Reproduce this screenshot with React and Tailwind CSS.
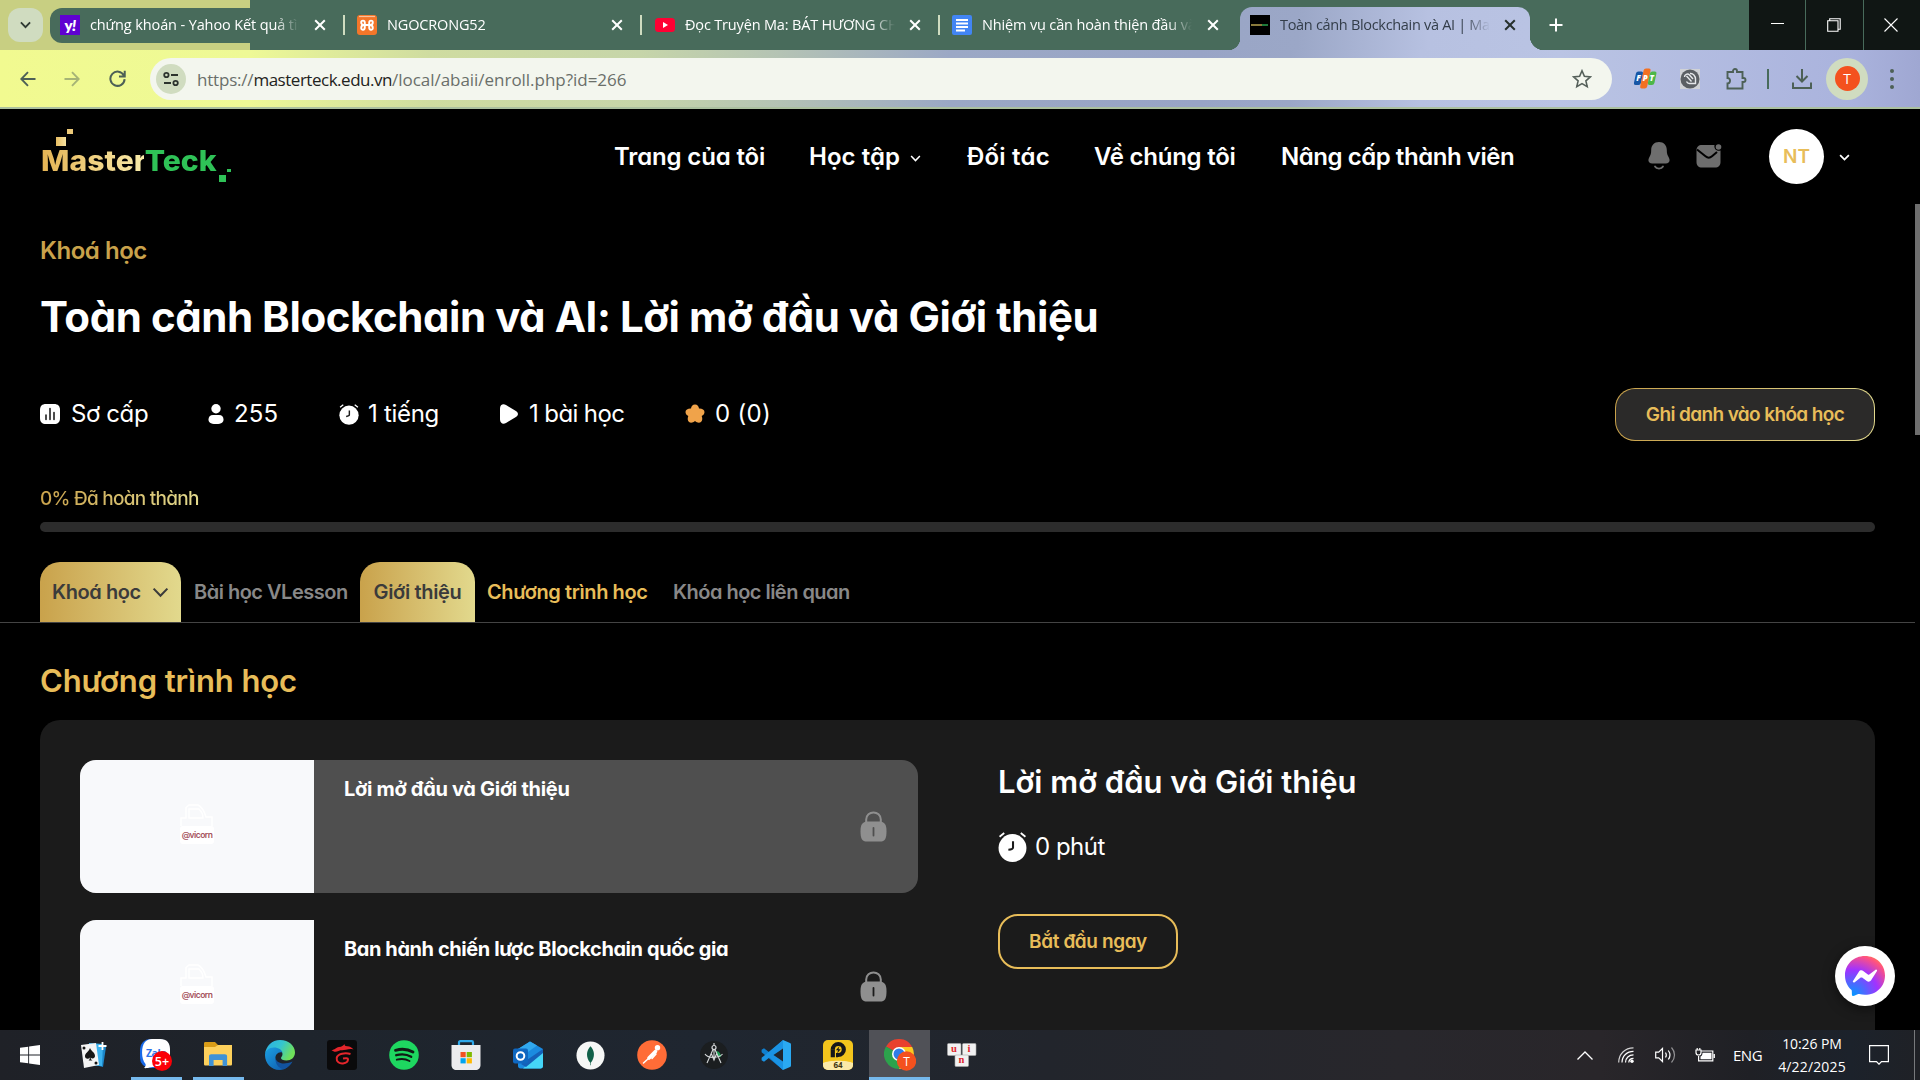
import React from "react";

const page = "font-['Inter','Liberation_Sans',sans-serif]";
const chrome = "font-['Open_Sans','Noto_Sans',sans-serif]";

function Close({ className = "" }) {
  return (
    <svg viewBox="0 0 12 12" className={"w-[12px] h-[12px] shrink-0 " + className} fill="none" stroke="currentColor" strokeWidth="2">
      <path d="M1.2 1.2 10.8 10.8M10.8 1.2 1.2 10.8" />
    </svg>
  );
}

function ChevronDown({ className = "", w = 2 }) {
  return (
    <svg viewBox="0 0 12 8" className={"shrink-0 " + className} fill="none" stroke="currentColor" strokeWidth={w}>
      <path d="M1 1.2 6 6.4 11 1.2" />
    </svg>
  );
}

function Tab({ icon, title, tracking, titleWidth, separator = true, className = "" }) {
  return (
    <div className={"flex items-center h-[35px] shrink-0 text-white " + className}>
      {icon}
      <div
        className={
          chrome + " ml-[10px] pt-[1px] text-[14.5px] leading-[20px] whitespace-nowrap overflow-hidden [mask-image:linear-gradient(to_right,#000_calc(100%-24px),transparent)] " +
          tracking + " " + titleWidth
        }
      >
        {title}
      </div>
      <Close className="ml-auto" />
      {separator && <div className="w-[2px] h-[20px] bg-[#cfdcc0] ml-[17px]" />}
    </div>
  );
}

function TabStrip() {
  return (
    <div className="relative flex h-[50px] bg-[#486b5b] shrink-0">
      <div className="w-[250px] h-[50px] bg-[#c8cf82] flex items-center shrink-0">
        <div className="ml-[8px] w-[35px] h-[34px] rounded-[12px] bg-[#d0dcc0] flex items-center justify-center text-[#2f3a33]">
          <ChevronDown className="w-[11px] h-[8px]" w={2} />
        </div>
        <div className="ml-[7px] flex-1 h-[35px] rounded-l-[12px] bg-[#486b5b]" />
      </div>
      <div className="absolute left-[60px] top-[7px] flex">
        <Tab
          className="w-[285px]"
          tracking="tracking-[-0.12px]"
          titleWidth="w-[209px]"
          title="chứng khoán - Yahoo Kết quả tìm"
          icon={
            <div className="w-[20px] h-[20px] bg-[#5f01d1] flex items-center justify-center shrink-0 text-white text-[15px] leading-[18px] font-extrabold font-['Lato',sans-serif] tracking-[-0.5px]">
              y<span className="italic">!</span>
            </div>
          }
        />
        <Tab
          className="w-[297px] pl-[12px]"
          tracking="tracking-[-0.15px]"
          titleWidth="w-[150px]"
          title="NGOCRONG52"
          icon={
            <svg viewBox="0 0 20 20" className="w-[20px] h-[20px] shrink-0">
              <rect width="20" height="20" rx="3" fill="#f3762a" />
              <path d="M2 1.5h16" stroke="#f8c09a" strokeWidth="1.2" />
              <path d="M4.200 7.200C4.200 5 7.800 5 7.800 7.500V12.500C7.800 15.500 4.200 15.500 4.200 13 4.200 11.500 5 10 7 10h6c2 0 2.800 1.500 2.800 3 0 2.500-3.600 2.500-3.600-.5V7.500C12.200 5 15.800 5 15.800 7.200 15.800 8.800 15 10 13 10H7C5 10 4.200 8.800 4.200 7.200z" fill="none" stroke="#fff" strokeWidth="1.900" />
            </svg>
          }
        />
        <Tab
          className="w-[298px] pl-[13px]"
          tracking="tracking-[-0.17px]"
          titleWidth="w-[210px]"
          title="Đọc Truyện Ma: BÁT HƯƠNG CHỦ"
          icon={
            <svg viewBox="0 0 20 14" className="w-[20px] h-[14px] shrink-0">
              <rect width="20" height="14" rx="3.500" fill="#ff0033" />
              <path d="M8 4v6l5-3z" fill="#fff" />
            </svg>
          }
        />
        <Tab
          className="w-[279px] pl-[12px]"
          tracking="tracking-[-0.15px]"
          titleWidth="w-[210px]"
          title="Nhiệm vụ cần hoàn thiện đầu vào"
          separator={false}
          icon={
            <svg viewBox="0 0 20 20" className="w-[20px] h-[20px] shrink-0">
              <rect width="20" height="20" rx="2" fill="#4285f4" />
              <path d="M4 5h12M4 8.500h12M4 12h12M4 15.500h9" stroke="#fff" strokeWidth="1.900" />
            </svg>
          }
        />
      </div>
      <div className="absolute left-[1228px] top-[7px] flex items-end">
        <div className="w-[12px] h-[12px] mt-[31px] bg-[radial-gradient(circle_at_0_0,transparent_12px,#9aa6c6_12.5px)]" />
        <div className="flex items-center w-[290px] h-[43px] rounded-t-[12px] pb-[8px] bg-[linear-gradient(to_right,#9aa6c6_0%,#9ba7c7_20%,#b7c1e1_65%,#b9c3e3_100%)] text-[#333d49]">
          <div className="ml-[10px] w-[20px] h-[20px] bg-black flex items-center shrink-0">
            <div className="w-[11px] h-[2px] ml-[1px] bg-[#8a7a3c]" />
            <div className="w-[6px] h-[2px] bg-[#1e7a3a]" />
          </div>
          <div className={chrome + " ml-[10px] pt-[1px] w-[210px] text-[14.5px] leading-[20px] tracking-[-0.31px] whitespace-nowrap overflow-hidden [mask-image:linear-gradient(to_right,#000_calc(100%-26px),transparent)]"}>
            Toàn cảnh Blockchain và AI | Master
          </div>
          <Close className="ml-auto mr-[14px] text-[#26302c]" />
        </div>
        <div className="w-[14px] h-[14px] bg-[radial-gradient(circle_at_100%_0,transparent_14px,#b9c3e3_14.5px)]" />
      </div>
      <svg viewBox="0 0 14 14" className="absolute left-[1549px] top-[18px] w-[14px] h-[14px]" stroke="#fff" strokeWidth="2">
        <path d="M7 .5v13M.5 7h13" />
      </svg>
      <div className="ml-auto flex gap-[1px] text-white">
        <div className="w-[56px] bg-[#101614] flex items-center justify-center pb-[3px]">
          <div className="w-[13px] h-[1px] bg-white" />
        </div>
        <div className="w-[57px] bg-[#101614] flex items-center justify-center pr-[2px]">
          <svg viewBox="0 0 14 14" className="w-[14px] h-[14px]" fill="none" stroke="#fff" strokeWidth="1.100">
            <path d="M.7 2.700h10.300v10.500H.7zM2.700 2.500V.7h10.500v10.500h-2" />
          </svg>
        </div>
        <div className="w-[56px] bg-[#101614] flex items-center justify-center pr-[2px]">
          <svg viewBox="0 0 14 14" className="w-[14px] h-[14px]" stroke="#fff" strokeWidth="1.100">
            <path d="M.5.5l13 13M13.500.5l-13 13" />
          </svg>
        </div>
      </div>
    </div>
  );
}

function Toolbar() {
  return (
    <div className="relative flex items-center h-[59px] shrink-0 border-b-2 border-[#abc09f] bg-[linear-gradient(to_right,#f1fa90_0px,#eef996_250px,#dfeb9b_330px,#cfdca0_430px,#c6d5a9_640px,#b4c3b4_780px,#9ba8c5_950px,#98a4c6_1200px,#9ba7c7_1290px,#b7c1e1_1420px,#bac4e4_1560px,#aab3dd_1850px,#9fa7d2_1920px)] text-[#4d6056]">
      <svg viewBox="0 0 16 16" className="ml-[20px] w-[16px] h-[16px]" fill="none" stroke="currentColor" strokeWidth="1.900">
        <path d="M15.500 8H1.500M8 1.200 1.300 8 8 14.800" />
      </svg>
      <svg viewBox="0 0 16 16" className="ml-[28px] w-[16px] h-[16px] opacity-45" fill="none" stroke="currentColor" strokeWidth="1.900">
        <path d="M.5 8h14M8 1.200 14.700 8 8 14.800" />
      </svg>
      <svg viewBox="0 0 16 16" className="ml-[29px] w-[17px] h-[17px]" fill="none" stroke="currentColor" strokeWidth="1.900">
        <path d="M14 5.200A6.700 6.700 0 1 0 14.700 8.600M14.800.8v5.400H9.400" />
      </svg>
      <div className="ml-[24px] w-[1462px] h-[42px] rounded-full bg-[#f3f6ee] flex items-center shrink-0">
        <div className="ml-[6px] w-[30px] h-[30px] rounded-full bg-[#d0dcc0] flex items-center justify-center">
          <svg viewBox="0 0 16 16" className="w-[16px] h-[16px]" fill="none" stroke="#2c332e" strokeWidth="1.800">
            <circle cx="3.400" cy="4" r="2.200" />
            <path d="M8 4h7M1 12h7" />
            <circle cx="12.600" cy="12" r="2.200" />
          </svg>
        </div>
        <div className={chrome + " ml-[11px] flex-1 text-[17px] leading-[24px] pt-[2px] text-[#6a6f6a] whitespace-nowrap"}>
          <span className="tracking-[-0.2px]">https://</span>
          <span className="tracking-[-0.48px] text-[#1e2320]">masterteck.edu.vn</span>
          <span className="tracking-[-0.03px]">/local/abaii/enroll.php?id=266</span>
        </div>
        <svg viewBox="0 0 20 20" className="mr-[20px] w-[20px] h-[20px]" fill="none" stroke="#55605a" strokeWidth="1.600">
          <path d="M10 1.800l2.400 5.500 6 .55-4.500 4 1.300 5.850L10 14.600l-5.200 3.100 1.300-5.850-4.500-4 6-.55z" />
        </svg>
      </div>
      <svg viewBox="0 0 22 20" className="ml-[22px] w-[22px] h-[21px] overflow-visible">
        <g transform="translate(3.500 0) skewX(-12)">
          <rect x="-0.500" y="3" width="7" height="13.500" rx="2" fill="#1656a6" />
          <rect x="6.500" y="0" width="7" height="20" rx="2" fill="#f37021" />
          <rect x="13.500" y="3" width="6.500" height="13.500" rx="2" fill="#4db748" />
        </g>
        <g fontSize="8" fontWeight="800" fill="#fff" fontFamily="Open Sans" textAnchor="middle" fontStyle="italic">
          <text x="4.600" y="12.800">F</text>
          <text x="11.200" y="12.800">P</text>
          <text x="17.800" y="12.800">T</text>
        </g>
      </svg>
      <svg viewBox="0 0 20 20" className="ml-[24px] w-[20px] h-[20px]">
        <rect width="20" height="20" fill="#d0d2d6" />
        <circle cx="10" cy="10" r="9.500" fill="#5b5f63" />
        <path d="M4.500 8C4.500 5.500 7.500 4 9.500 6l3.500 4M6.500 7l5 5.500M10 4.500c3-.5 5.500 2.500 5.500 5.500v4.500H9.500c-1.500 0-2.500-.8-3-2" fill="none" stroke="#e6e8ea" strokeWidth="1.400" />
      </svg>
      <svg viewBox="0 0 22 22" className="ml-[25px] w-[22px] h-[22px]" fill="none" stroke="currentColor" strokeWidth="1.900">
        <path d="M2.500 4h5.500V3a2 2 0 0 1 4 0v1h5.500v6h1a2 2 0 0 1 0 4h-1v6.500h-15v-5c3.200 0 3.600-5.500 0-5.500z" />
      </svg>
      <div className="ml-[20px] w-[2px] h-[20px] bg-[#486b5b]" />
      <svg viewBox="0 0 20 20" className="ml-[23px] w-[20px] h-[20px]" fill="none" stroke="currentColor" strokeWidth="2">
        <path d="M10 0v12M4.500 7l5.500 5.500L15.500 7M1 13.500V19h18v-5.500" />
      </svg>
      <div className="ml-[14px] w-[42px] h-[42px] rounded-full bg-[#d0dcc0] flex items-center justify-center">
        <div className={chrome + " w-[25px] h-[25px] rounded-full bg-[#f4511e] text-white text-[14px] leading-[25px] text-center"}>T</div>
      </div>
      <div className="ml-[22px] flex flex-col gap-[4px]">
        <div className="w-[4px] h-[4px] rounded-full bg-[#4d6056]" />
        <div className="w-[4px] h-[4px] rounded-full bg-[#4d6056]" />
        <div className="w-[4px] h-[4px] rounded-full bg-[#4d6056]" />
      </div>
    </div>
  );
}

function Logo() {
  return (
    <div className="relative w-[190px] h-[60px] flex items-end">
      <div className="absolute left-[16px] top-[11px] w-[10px] h-[9px] bg-gradient-to-r from-[#e8bd62] to-[#f6e3a0]" />
      <div className="absolute left-[27px] top-[3px] w-[6px] h-[5px] bg-[#ecc979]" />
      <div className="text-[28px] leading-[28px] font-extrabold whitespace-nowrap pl-[1px] mb-[11px] origin-left scale-x-[1.075] font-['Inter',sans-serif] [font-feature-settings:normal]">
        <span className="text-transparent bg-clip-text bg-gradient-to-r from-[#e5b453] to-[#f8eba9]">Master</span>
        <span className="text-[#2fc257]">Teck</span>
      </div>
      <div className="absolute left-[179px] top-[49px] w-[7px] h-[7px] bg-[#2fc257]" />
      <div className="absolute left-[187px] top-[43px] w-[4px] h-[3px] bg-[#2fc257]" />
    </div>
  );
}

function Header() {
  return (
    <div className="flex items-center h-[95px] text-white shrink-0">
      <div className="w-[614px] pl-[40px] pb-[1px] shrink-0">
        <Logo />
      </div>
      <nav className="flex items-center text-[24px] leading-[32px] font-semibold whitespace-nowrap">
        <span className="w-[195px] tracking-[-0.15px]">Trang của tôi</span>
        <span className="w-[101px] tracking-[0.05px]">Học tập</span>
        <ChevronDown className="w-[11px] h-[7px] mr-[46px] mt-[4px]" w={1.700} />
        <span className="w-[127px] tracking-[0.2px]">Đối tác</span>
        <span className="w-[187px] tracking-[-0.25px]">Về chúng tôi</span>
        <span className="tracking-[-0.45px]">Nâng cấp thành viên</span>
      </nav>
      <div className="ml-auto flex items-center text-[#6e6e6e]">
        <svg viewBox="0 0 22 28" className="w-[22px] h-[28px] mb-[2px]" fill="currentColor">
          <path d="M11 0c4.800 0 7.800 3.500 7.800 8 0 3.800.6 4.800 2 7.500 1.800 3.500.4 6-3 6H4.200c-3.400 0-4.800-2.500-3-6 1.400-2.700 2-3.700 2-7.500 0-4.500 3-8 7.800-8z" />
          <path d="M7 24.500c1.500 2.700 6.500 2.700 8 0" fill="none" stroke="currentColor" strokeWidth="1.800" strokeLinecap="round" />
        </svg>
        <svg viewBox="0 0 26 24" className="ml-[26px] w-[26px] h-[24px] mb-[1px]">
          <path d="M6 1h12.500c-.8 4 2 6.500 6 5.600V18c0 3.500-2 5.500-5.500 5.500H6C2.500 23.500.5 21.500.5 18V6.500C.5 3 2.500 1 6 1z" fill="currentColor" />
          <circle cx="22.500" cy="3" r="2.800" fill="currentColor" />
          <path d="M1 5.500l8.500 6.800c2 1.700 4.500 1.700 6.500 0L21 8" fill="none" stroke="#000" strokeWidth="2" />
        </svg>
        <div className="ml-[47px] w-[55px] h-[55px] rounded-full bg-white text-[#e8bd59] text-[19px] font-semibold flex items-center justify-center pt-[1px]">NT</div>
        <ChevronDown className="ml-[15px] mr-[70px] w-[11px] h-[7px] mt-[2px] text-white" w={2} />
      </div>
    </div>
  );
}

function Clock({ className }) {
  return (
    <svg viewBox="0 0 28 29" className={"shrink-0 " + className}>
      <circle cx="14" cy="15.500" r="13.500" fill="#fff" />
      <path d="M1.500 4.500 6 1M26.500 4.500 22 1" stroke="#fff" strokeWidth="1.800" />
      <path d="M14.500 9v6c0 1.500-.8 2-4.500 2.200" fill="none" stroke="#1b1b1b" strokeWidth="2" />
    </svg>
  );
}

function Meta() {
  return (
    <div className="flex items-center h-[54px] text-white text-[24px] leading-[30px] whitespace-nowrap">
      <div className="flex items-center w-[167px]">
        <svg viewBox="0 0 20 20" className="w-[20px] h-[20px] mr-[11px]">
          <path d="M6 0h8c4 0 6 2 6 6v8c0 4-2 6-6 6H6c-4 0-6-2-6-6V6c0-4 2-6 6-6z" fill="#fff" />
          <path d="M6 11v4.500M10 4.500v11M14 8.500v7" stroke="#111" strokeWidth="1.500" strokeLinecap="round" />
        </svg>
        <span className="tracking-[-0.4px]">Sơ cấp</span>
      </div>
      <div className="flex items-center w-[132px]">
        <svg viewBox="0 0 16 20" className="w-[16px] h-[20px] mr-[10px] ml-[1px]" fill="#fff">
          <circle cx="8" cy="4.700" r="4.700" />
          <path d="M5 11h6c3 0 4.500 2 4.500 4.500S14 20 8 20 .5 18 .5 15.500 2 11 5 11z" />
        </svg>
        <span className="tracking-[0.1px]">255</span>
      </div>
      <div className="flex items-center w-[160px]">
        <Clock className="w-[20px] h-[21px] mr-[9px]" />
        <span className="tracking-[-0.3px]">1 tiếng</span>
      </div>
      <div className="flex items-center w-[185px]">
        <svg viewBox="0 0 20 20" className="w-[20px] h-[20px] mr-[10px]" fill="#fff">
          <path d="M1 4.500C1 .8 4 -.8 7 1l9.500 5.800c3.300 2 3.300 4.500 0 6.400L7 19c-3 1.800-6 .2-6-3.500z" />
        </svg>
        <span className="tracking-[-0.6px]">1 bài học</span>
      </div>
      <div className="flex items-center">
        <svg viewBox="0 0 20 20" className="w-[20px] h-[20px] mr-[10px] ml-[1px]">
          <path d="M10 .5c2.500 0 3.800 1.800 4 4 2.800-.2 5.500 1 5.500 3.500 0 2-1.200 3.200-2.800 4 .9 2.300.9 4.700-.7 6-2 1.400-4.200.4-6-1-1.800 1.400-4 2.400-6 1-1.600-1.300-1.600-3.700-.7-6C1.700 11.200.5 10 .5 8c0-2.500 2.700-3.700 5.500-3.500.2-2.200 1.500-4 4-4z" fill="#f0a34a" />
        </svg>
        <span className="tracking-[0.3px]">0 (0)</span>
      </div>
      <div className="ml-auto w-[260px] h-[53px] rounded-[20px] p-[1px] bg-gradient-to-r from-[#c9a24b] to-[#e2d98d]">
        <div className="w-full h-full rounded-[19px] bg-[#2b2a29] flex items-center justify-center pt-[2px] text-[19px] font-semibold text-[#e8bd59] tracking-[-0.62px]">
          Ghi danh vào khóa học
        </div>
      </div>
    </div>
  );
}

function CourseTabs() {
  return (
    <div className="flex items-end h-[61px] border-b border-[#444] pl-[40px] mr-[5px] text-[20px] leading-[61px] font-semibold whitespace-nowrap shrink-0">
      <div className="w-[141px] h-[60px] rounded-t-[20px] bg-gradient-to-r from-[#c9a24b] to-[#e2d98d] text-[#3b3b3b] pl-[12px] flex items-center tracking-[-0.42px]">
        Khoá học
        <ChevronDown className="ml-[11px] w-[17px] h-[11px]" w={1.500} />
      </div>
      <div className="w-[179px] h-[60px] pl-[13px] text-[#888] tracking-[-0.5px]">Bài học VLesson</div>
      <div className="w-[115px] h-[60px] rounded-t-[20px] bg-gradient-to-r from-[#c9a24b] to-[#e2d98d] text-[#3b3b3b] text-center tracking-[-0.35px]">Giới thiệu</div>
      <div className="w-[185px] h-[60px] pl-[12px] text-[#e8bd59] tracking-[-0.4px]">Chương trình học</div>
      <div className="h-[60px] pl-[13px] text-[#888] tracking-[-0.52px]">Khóa học liên quan</div>
    </div>
  );
}

function Lesson({ title, active, tracking }) {
  return (
    <div className={"flex w-[838px] h-[133px] rounded-[16px] overflow-hidden shrink-0 " + (active ? "bg-[#4f4f4f]" : "bg-transparent")}>
      <div className="w-[234px] h-[133px] bg-[#f8f9fb] flex flex-col items-center justify-center pt-[13px] shrink-0">
        <svg viewBox="0 0 34 22" className="w-[34px] h-[22px] -mt-[18px]" fill="none" stroke="#fff" strokeWidth="1.500">
          <path d="M1 22V14h5V3.500L9 1h9c4 2 6 5 8 12h6v9M9 14V5h10c2 2 4 5 4 9z" />
        </svg>
        <div className="w-[34px] h-[18px] rounded-[3px] bg-white flex items-center justify-center text-[8.5px] leading-[10px] font-semibold text-[#a5525c] tracking-[-0.55px]">
          @vicorn
        </div>
      </div>
      <div className={"pl-[30px] pt-[14px] text-[20px] leading-[30px] font-bold text-white whitespace-nowrap " + tracking}>{title}</div>
      <svg viewBox="0 0 27 31" className="ml-auto mr-[31px] mt-[51px] w-[27px] h-[31px] shrink-0">
        <path d="M6.200 13V8.500c0-9.500 14.600-9.500 14.600 0V13" fill="none" stroke="#8f8f8f" strokeWidth="2" />
        <path d="M6 10.500h15c4 1 5.500 4 5.500 9.500 0 8-1.500 10.500-6.500 10.500H7C2 30.500.5 28 .5 20 .5 14.500 2 11.500 6 10.500z" fill="#8f8f8f" />
        <path d="M13.500 17v7.500" stroke={active ? "#4f4f4f" : "#1b1b1b"} strokeWidth="1.800" strokeLinecap="round" />
      </svg>
    </div>
  );
}

function Messenger() {
  return (
    <div className="absolute left-[1835px] top-[946px] w-[60px] h-[60px] rounded-full bg-white shadow-[0_3px_12px_rgba(0,0,0,0.5)] flex items-center justify-center">
      <svg viewBox="0 0 40 40" className="w-[40px] h-[40px]">
        <defs>
          <radialGradient id="msg" cx="0.19" cy="0.99" r="1.09">
            <stop offset="0" stopColor="#0099ff" />
            <stop offset="0.6" stopColor="#a033ff" />
            <stop offset="0.93" stopColor="#ff5280" />
            <stop offset="1" stopColor="#ff7061" />
          </radialGradient>
        </defs>
        <path d="M20 0C8.700 0 0 8.300 0 19.400c0 5.800 2.400 10.900 6.300 14.300.3.300.5.700.5 1.200l.1 3.500c0 1.200 1.200 1.900 2.300 1.400l4-1.700c.3-.2.700-.2 1.100-.1 1.800.5 3.700.8 5.700.8 11.300 0 20-8.300 20-19.400S31.300 0 20 0z" fill="url(#msg)" />
        <path d="M8 25.100l5.900-9.300c.9-1.500 2.900-1.900 4.300-.8l4.700 3.500c.4.300 1 .3 1.400 0l6.300-4.800c.8-.6 1.900.4 1.400 1.300l-5.900 9.300c-.9 1.500-2.900 1.900-4.300.8l-4.700-3.500c-.4-.3-1-.3-1.400 0L9.400 26.400c-.9.600-2-.4-1.400-1.300z" fill="#fff" />
      </svg>
    </div>
  );
}

function Slot({ children, underline, active }) {
  return (
    <div className="relative w-[62px] h-[50px] flex items-center justify-center shrink-0">
      {active && <div className="absolute inset-y-0 left-0 w-[61px] bg-[#505157]" />}
      <div className="relative flex items-center justify-center">{children}</div>
      {underline && <div className={"absolute bottom-0 h-[3px] bg-[#76b9ed] " + (active ? "left-0 w-[61px]" : "left-[6px] w-[51px]")} />}
    </div>
  );
}

const ic = "w-[30px] h-[30px]";

function TaskIcons() {
  return (
    <>
      <Slot>
        <svg viewBox="0 0 20 20" className="w-[20px] h-[20px] mr-[4px]" fill="#fff">
          <path d="M0 2.800 8.200 1.700V9.600H0zM9.100 1.500 20 0V9.600H9.100zM0 10.400H8.200V18.300L0 17.200zM9.100 10.400H20V20L9.100 18.500z" />
        </svg>
      </Slot>
      <Slot>
        <svg viewBox="0 0 28 28" className="w-[28px] h-[28px]">
          <path d="M12 3l14 3-3 20-12-3z" fill="#1b86c9" />
          <path d="M9 2l14 1-1 22-12-1z" fill="#3bb2ef" />
          <path d="M1 4l15-2 3 22-15 3z" fill="#f4f4f4" />
          <path d="M10 7c1.500 3.500 5 4.500 5 8 0 2.500-3 3.200-4.300 1.500.1 1.800.8 2.500 1.800 3H8.500c1-.7 1.300-1.500 1.200-3C8.500 18.500 5.300 18 5 15.500 4.800 12 8.800 11 10 7z" fill="#161616" />
          <circle cx="4" cy="7" r="1.500" fill="#161616" />
          <circle cx="16" cy="22" r="1.500" fill="#161616" />
          <path d="M22.500 1v8M18.500 5h8" stroke="#fff" strokeWidth="1.800" />
        </svg>
      </Slot>
      <Slot underline>
        <svg viewBox="0 0 32 32" className="w-[32px] h-[32px]">
          <rect x="0" y="0" width="29" height="29" rx="10" fill="#1768e8" />
          <path d="M12 0h8c7 0 10 4 10 10v9c0 6-4 9-10 9h-6c-2 0-4 0-6 1-1 0-3 .3-4 0 1.500-1.500 2-2.500 1.500-4C1 20 1 7 5 3c2-2 4-3 7-3z" fill="#fff" />
          <text x="6" y="17.500" fontSize="10.500" fontWeight="700" fill="#2d74ea" fontFamily="Open Sans" letterSpacing="-0.500">Zalo</text>
          <circle cx="22" cy="22" r="10" fill="#fb0007" />
          <text x="22" y="26.500" fontSize="12.500" fontWeight="600" fill="#fff" textAnchor="middle" fontFamily="Open Sans">5+</text>
        </svg>
      </Slot>
      <Slot underline>
        <svg viewBox="0 0 28 24" className="w-[28px] h-[24px] mb-[2px]">
          <path d="M0 1.500C0 .5.500 0 1.500 0H11l3 3H26c1 0 1.500.5 1.500 1.500V12H0z" fill="#d99c17" />
          <path d="M0 5h11l3-2h14v19c0 1-.5 1.500-1.500 1.500h-25C.5 23.500 0 23 0 22z" fill="#fdd05c" />
          <path d="M5 24V14.500c0-1.500.8-2.300 2.300-2.300h13.500c1.500 0 2.300.8 2.300 2.300V24h-4.500v-6h-9v6z" fill="#3f92d6" />
        </svg>
      </Slot>
      <Slot>
        <svg viewBox="0 0 30 30" className={ic}>
          <defs>
            <linearGradient id="edgeA" x1="0" y1="0" x2="1" y2="0.400">
              <stop offset="0" stopColor="#2aaee8" />
              <stop offset="0.55" stopColor="#35c5cf" />
              <stop offset="1" stopColor="#6fe05a" />
            </linearGradient>
            <linearGradient id="edgeB" x1="0" y1="0" x2="1" y2="1">
              <stop offset="0" stopColor="#1ba0e4" />
              <stop offset="1" stopColor="#0f57a8" />
            </linearGradient>
          </defs>
          <path d="M0 14C1 6 7 0 15 0c9 0 15 6 15 12.500 0 5-4 8-8.500 8-3.500 0-5.500-1-5.500-2.500 0-1 1.500-1.500 1.500-4C17.500 11 14 9 10.500 9 5 9 1 11 0 14z" fill="url(#edgeA)" />
          <path d="M0 15c0-4 4-7.500 9-7.500 4.500 0 8 2.500 8.500 5-4-1.500-7.500 2-7 6 .5 5 6 9 13 7.500-3 3-6 4-9 4C6 30 0 23 0 15z" fill="url(#edgeB)" />
          <path d="M10.500 18c1 5 7.500 7.500 17 3.500-2 4-5.500 7-9.500 7.500-5-1-8-6-7.500-11z" fill="#12539f" />
        </svg>
      </Slot>
      <Slot>
        <svg viewBox="0 0 30 30" className={ic}>
          <rect width="30" height="30" rx="3" fill="#0a0a0b" />
          <path d="M4.500 10C8 10 8.500 7.500 12 7c3-.4 4-1 5.500-3 0 1.700.8 2.300 3 2.200 2.500 0 4.500 1.300 6 3.300-3-1-5-.3-7.500.3C16 10.500 14 9.800 11.500 11 9 12.200 6.500 12 4.500 10z" fill="#e5252b" />
          <path d="M23.500 14c-5-1.600-13-.6-13.800 4-.5 3.800 2.800 5.800 6.300 5.400 3.200-.4 5-2 5-4.200 0-1-2-1.200-5-.7" fill="none" stroke="#e5252b" strokeWidth="2" />
        </svg>
      </Slot>
      <Slot>
        <svg viewBox="0 0 30 30" className={ic} fill="none" stroke="#101a14" strokeLinecap="round">
          <circle cx="15" cy="15" r="14.800" fill="#1ed760" stroke="none" />
          <path d="M6.500 10.300c6-1.700 12.500-1.100 17.500 1.700" strokeWidth="2.800" />
          <path d="M7.200 15.200c5-1.400 10.800-.9 15 1.600" strokeWidth="2.300" />
          <path d="M7.800 19.700c4.300-1.200 9-.8 12.700 1.300" strokeWidth="1.900" />
        </svg>
      </Slot>
      <Slot>
        <svg viewBox="0 0 30 30" className={ic}>
          <path d="M8 6.500V2.500c0-.8.500-1.300 1.300-1.300h11.400c.8 0 1.300.5 1.300 1.300v4" fill="none" stroke="#2fa8ea" strokeWidth="2.200" />
          <path d="M.5 5h29v20c0 3-2 5-5 5h-19c-3 0-5-2-5-5z" fill="#ececee" />
          <path d="M9.500 12h5.200v5.200H9.500z" fill="#f25022" />
          <path d="M15.700 12h5.200v5.200h-5.200z" fill="#7fba00" />
          <path d="M9.500 18.200h5.200v5.200H9.500z" fill="#00a4ef" />
          <path d="M15.700 18.200h5.200v5.200h-5.200z" fill="#ffb900" />
        </svg>
      </Slot>
      <Slot>
        <svg viewBox="0 0 30 28" className="w-[30px] h-[28px]">
          <path d="M5 8 17 .5 30 8v17c0 1.500-1 2.500-2.500 2.500h-20C6 27.500 5 26.500 5 25z" fill="#1b8be0" />
          <path d="M5 8 17 .5l7 4L8 16z" fill="#31a8ee" />
          <path d="M30 10 10 27.500h17.500c1.500 0 2.500-1 2.500-2.500z" fill="#45d6f8" />
          <path d="M30 8v4L13 26l-5-3z" fill="#1560b8" />
          <rect x="0" y="7.500" width="15" height="15" rx="2" fill="#0f67c0" />
          <circle cx="7.500" cy="15" r="3.800" fill="none" stroke="#fff" strokeWidth="2" />
        </svg>
      </Slot>
      <Slot>
        <svg viewBox="0 0 30 30" className="w-[29px] h-[29px]">
          <circle cx="15" cy="15" r="14.500" fill="#f6f7f6" />
          <path d="M15 5.500c4.500 4.500 5 11.500.3 17V25h-.6v-2.500c-4.700-5.500-4.200-12.500.3-17z" fill="#116149" />
        </svg>
      </Slot>
      <Slot>
        <svg viewBox="0 0 30 30" className={ic} fill="none" stroke="#fff" strokeLinecap="round">
          <circle cx="15" cy="15" r="14.800" fill="#ff6c37" stroke="none" />
          <circle cx="20.500" cy="7.800" r="2.700" fill="#fff" stroke="none" />
          <path d="M18.500 11.500 12 18" strokeWidth="3.600" />
          <path d="M12 18l-5.500 5M19 14l-4 4.500" strokeWidth="1.500" />
        </svg>
      </Slot>
      <Slot>
        <svg viewBox="0 0 30 30" className={ic} fill="none" stroke="#d7dadb">
          <circle cx="15" cy="15" r="14" fill="#1b1e20" stroke="none" />
          <path d="M17 11c3 0 5 3 5 6l-4-1z" fill="#1f9d55" stroke="none" />
          <circle cx="15" cy="7.500" r="2" strokeWidth="1.200" />
          <path d="M15 3v2.500M14 9.500 8 23M16 9.500 22 23M15 10v8M6 14c2.500 4.500 14 4.500 17.500 0M12.500 14l2.500 6 2.500-6" strokeWidth="1.100" />
        </svg>
      </Slot>
      <Slot>
        <svg viewBox="0 0 30 30" className={ic}>
          <path d="M22 0 8.500 12.500 3 8.300.6 9.800v2.400L22 30z" fill="#0f7fd0" />
          <path d="M22 30 8.500 17.500 3 21.700.6 20.200v-2.400L22 0z" fill="#1a93e4" />
          <path d="M22 8.500 12.500 15l9.500 6.500z" fill="#20262e" />
          <path d="M22 0l7 3c.7.300 1 .8 1 1.500v21c0 .7-.3 1.200-1 1.500l-7 3z" fill="#2aa9f2" />
        </svg>
      </Slot>
      <Slot>
        <svg viewBox="0 0 30 30" className={ic}>
          <defs>
            <clipPath id="ld"><rect width="30" height="30" rx="5" /></clipPath>
          </defs>
          <g clipPath="url(#ld)">
            <rect width="30" height="30" fill="#f4c51c" />
            <path d="M0 23c6-3 24-3 30 0v7H0z" fill="#fbe9a8" />
          </g>
          <path d="M9.800 9.500a5.500 5.500 0 1 1 5.500 5.500H14" fill="none" stroke="#17171a" strokeWidth="4.200" />
          <path d="M7.700 9.300h4.200v7.900H7.700zM13 13h2v4.200h-2z" fill="#17171a" />
          <path d="M16.300 6.500 12.800 10.200h2.200l-.8 3.200 3.500-4.200h-2.200z" fill="#17171a" />
          <text x="15" y="28" fontSize="8" fontWeight="700" fill="#3c3210" textAnchor="middle" fontFamily="Open Sans">64</text>
        </svg>
      </Slot>
      <Slot underline active>
        <svg viewBox="0 0 32 32" className="w-[32px] h-[32px]">
          <path d="M15 15 2 7.500A15 15 0 0 1 28 7.500z" fill="#e8402f" />
          <path d="M2 7.500A15 15 0 0 0 15 30l7-12-7-3z" fill="#2ca24c" />
          <path d="M15 8h13.200A15 15 0 0 1 15 30l6.500-11z" fill="#fdc921" />
          <circle cx="15" cy="15" r="7" fill="#fff" />
          <circle cx="15" cy="15" r="5.500" fill="#2f7de9" />
          <circle cx="22.500" cy="22" r="9.700" fill="#f4511e" />
          <text x="22.500" y="26.500" fontSize="12" fill="#fff" textAnchor="middle" fontFamily="Open Sans">T</text>
        </svg>
      </Slot>
      <Slot>
        <svg viewBox="0 0 30 24" className="w-[30px] h-[24px]" fontFamily="Liberation Serif" fontWeight="700" fontSize="10.500" textAnchor="middle">
          <g fill="#f1f1f1" stroke="#aaa" strokeWidth="0.600">
            <rect x="0.500" y="0.500" width="13.500" height="12" rx="1" />
            <rect x="15.500" y="0.500" width="13.500" height="12" rx="1" />
            <rect x="8" y="12" width="13.500" height="11.500" rx="1" />
          </g>
          <g fill="#e0262c">
            <text x="7" y="9">u</text>
            <text x="22" y="9">i</text>
            <text x="14.500" y="20">n</text>
          </g>
        </svg>
      </Slot>
    </>
  );
}

function Taskbar() {
  return (
    <div className="relative h-[50px] flex items-center pl-[1px] shrink-0 bg-[linear-gradient(to_right,#1f2127_0px,#1e242c_300px,#1f2630_700px,#22252c_1050px,#28272c_1400px,#29262a_1600px,#1f2025_1750px,#1c222b_1850px,#1f2126_1920px)]">
      <TaskIcons />
      <div className={chrome + " ml-auto flex items-center text-white text-[14px]"}>
        <svg viewBox="0 0 16 9" className="w-[16px] h-[9px]" fill="none" stroke="#fff" strokeWidth="1.300">
          <path d="M.5 8.500 8 1l7.500 7.500" />
        </svg>
        <svg viewBox="0 0 16 16" className="ml-[25px] w-[16px] h-[16px]" fill="none" stroke="#fff" strokeWidth="1.200">
          <path d="M.7 15.500C.7 7 7 .8 15.500.8" opacity=".8" />
          <path d="M4 15.500C4 9 9 4.300 15.500 4.300M7.500 15.500c0-4.500 3.500-7.600 8-7.600M10.800 15.500c0-2.500 2-4.200 4.700-4.200" />
          <circle cx="14" cy="14.200" r="1.700" fill="#fff" stroke="none" />
        </svg>
        <svg viewBox="0 0 21 18" className="ml-[21px] w-[21px] h-[18px]" fill="none" stroke="#fff" strokeWidth="1.200">
          <path d="M.7 6.200h3L7.500 2.500v13L3.700 11.800h-3z" />
          <path d="M10.500 6.500c1 1.500 1 3.500 0 5M13.300 4.500c2 2.700 2 6.300 0 9" />
          <path d="M16.500 1.500c4 4.500 4 10.500 0 15" opacity=".5" />
        </svg>
        <svg viewBox="0 0 20 14" className="ml-[19px] w-[20px] h-[14px]" fill="none" stroke="#fff" strokeWidth="1.200">
          <path d="M5.500 3h12.300v9.800H3.600V8M1 2h5v2.500C6 6.500 5 7 3.500 7S1 6.500 1 4.500zM2.200 0v2M4.800 0v2M19.300 6v4" />
          <path d="M7.500 4.800h9v6.500h-11V8.500c1.500-.5 2-2 2-3.700z" fill="#fff" stroke="none" />
        </svg>
        <span className="ml-[18px] w-[31px] text-[15px] tracking-[-0.5px]">ENG</span>
        <div className="ml-[10px] w-[76px] text-center leading-[23px] pb-[1px] whitespace-nowrap">
          <div className="tracking-[-0.1px]">10:26 PM</div>
          <div className="tracking-[0.15px]">4/22/2025</div>
        </div>
        <svg viewBox="0 0 20 20" className="ml-[19px] mr-[25px] w-[20px] h-[20px]" fill="none" stroke="#fff" strokeWidth="1.200">
          <path d="M.6.6h18.800v16H12.500L10 19.200 7.500 16.600H.6z" />
        </svg>
        <div className="w-[1px] h-[50px] bg-[#77797c] mr-[5px]" />
      </div>
    </div>
  );
}

export default function App() {
  return (
    <div className={page + " relative w-[1920px] h-[1080px] overflow-hidden bg-black flex flex-col [font-feature-settings:'cv11']"}>
      <TabStrip />
      <Toolbar />
      <Header />
      <div className="h-[826px] overflow-hidden flex flex-col">
        <div className="px-[40px] pr-[45px] flex flex-col shrink-0">
          <div className="mt-[31px] text-[24px] leading-[32px] font-semibold tracking-[-0.45px] text-[#c9a24b]">Khoá học</div>
          <h1 className="mt-[20px] text-[42px] leading-[60px] font-bold tracking-[-0.44px] text-white whitespace-nowrap">
            Toàn cảnh Blockchain và AI: Lời mở đầu và Giới thiệu
          </h1>
          <div className="mt-[40px]">
            <Meta />
          </div>
          <div className="mt-[46px] flex">
            <span className="text-[19px] leading-[24px] font-medium tracking-[-0.73px] text-transparent bg-clip-text bg-gradient-to-r from-[#c9a24b] to-[#e2d98d]">0% Đã hoàn thành</span>
          </div>
          <div className="mt-[11px] h-[10px] rounded-full bg-[#2c2c2c]" />
        </div>
        <div className="mt-[30px]">
          <CourseTabs />
        </div>
        <h2 className="mt-[38px] pl-[40px] text-[31px] leading-[40px] font-semibold tracking-[-0.1px] text-[#e8bd59] shrink-0">Chương trình học</h2>
        <div className="mt-[19px] ml-[40px] w-[1835px] h-[400px] rounded-[20px] bg-[#1b1b1b] flex pt-[40px] pl-[40px] shrink-0">
          <div className="flex flex-col gap-[27px]">
            <Lesson active title="Lời mở đầu và Giới thiệu" tracking="tracking-[-0.3px]" />
            <Lesson title="Ban hành chiến lược Blockchain quốc gia" tracking="tracking-[-0.42px]" />
          </div>
          <div className="ml-[80px] text-white whitespace-nowrap">
            <div className="mt-[2px] text-[31px] leading-[40px] font-semibold">Lời mở đầu và Giới thiệu</div>
            <div className="mt-[30px] flex items-center text-[24px] leading-[30px]">
              <Clock className="w-[29px] h-[30px] mr-[8px]" />
              <span className="tracking-[-0.5px]">0 phút</span>
            </div>
            <div className="mt-[52px] w-[180px] h-[55px] rounded-[20px] border-2 border-[#e8bd59] flex items-center justify-center pt-[2px] text-[19px] font-semibold tracking-[-0.4px] text-[#e8bd59]">
              Bắt đầu ngay
            </div>
          </div>
        </div>
      </div>
      <Taskbar />
      <div className="absolute left-[1915px] top-[204px] w-[5px] h-[231px] bg-[#6e6e6e]" />
      <Messenger />
    </div>
  );
}
